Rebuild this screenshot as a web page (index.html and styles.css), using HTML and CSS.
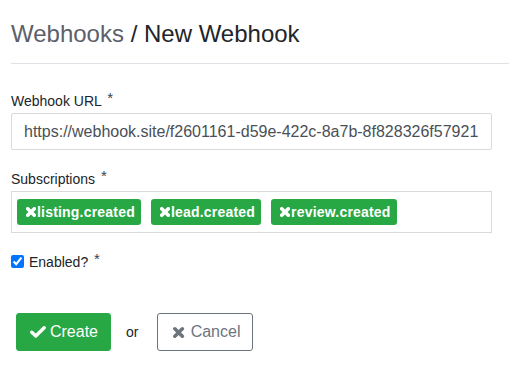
FILE: index.html
```html
<!DOCTYPE html>
<html lang="en">
<head>
<meta charset="utf-8">
<title>New Webhook</title>
<link rel="stylesheet" href="styles.css">
</head>
<body>
<div class="page">
  <h1 class="title"><span class="crumb">Webhooks</span> / New Webhook</h1>
  <hr class="rule">
  <form class="form">
    <div class="group">
      <label class="label" for="url">Webhook URL <sup class="req">*</sup></label>
      <input id="url" class="input" type="text" value="https://webhook.site/f2601161-d59e-422c-8a7b-8f828326f57921">
    </div>
    <div class="group">
      <label class="label">Subscriptions <sup class="req">*</sup></label>
      <div class="tags">
        <span class="tag"><svg class="tag-x" viewBox="0 0 10 10"><path d="M1.7 1.7 L8.3 8.3 M8.3 1.7 L1.7 8.3"/></svg>listing.created</span>
        <span class="tag"><svg class="tag-x" viewBox="0 0 10 10"><path d="M1.7 1.7 L8.3 8.3 M8.3 1.7 L1.7 8.3"/></svg>lead.created</span>
        <span class="tag"><svg class="tag-x" viewBox="0 0 10 10"><path d="M1.7 1.7 L8.3 8.3 M8.3 1.7 L1.7 8.3"/></svg>review.created</span>
      </div>
    </div>
    <div class="group check-group">
      <input id="enabled" class="check" type="checkbox" checked>
      <label class="check-label" for="enabled">Enabled? <sup class="req">*</sup></label>
    </div>
    <div class="actions">
      <button type="button" class="btn btn-create"><svg class="ico-check" viewBox="0 0 16 12"><path d="M1.8 6.2 L5.8 10 L14.2 1.8"/></svg>Create</button>
      <span class="or">or</span>
      <button type="button" class="btn btn-cancel"><svg class="ico-x" viewBox="0 0 12 12"><path d="M2 2 L10 10 M10 2 L2 10"/></svg>Cancel</button>
    </div>
  </form>
</div>
</body>
</html>
```

FILE: styles.css
```css
* { box-sizing: border-box; }

html, body {
  margin: 0;
  padding: 0;
  background: #ffffff;
  font-family: "Liberation Sans", Arial, sans-serif;
  color: #212529;
}

.page {
  padding: 19px 0 0 11px;
}

.title {
  margin: 0;
  font-size: 24px;
  line-height: 29px;
  font-weight: normal;
  color: #212529;
}

.crumb {
  color: #5c6069;
}

.rule {
  margin: 15px 0 0 0;
  border: 0;
  border-top: 1px solid #dee2e6;
  height: 0;
}

.form {
  width: 481px;
  margin-top: 27px;
}

.group {
  margin-bottom: 19px;
}

.label {
  display: block;
  font-size: 14px;
  line-height: 21px;
  margin-bottom: 1px;
  color: #212529;
}

.req {
  font-size: 15px;
  line-height: 0;
  vertical-align: 3px;
  margin-left: 2px;
  color: #3a3f4a;
}

.input {
  display: block;
  width: 100%;
  height: 37px;
  margin: 0;
  padding: 0 12px;
  border: 1px solid #dadada;
  border-radius: 2px;
  font-family: "Liberation Sans", Arial, sans-serif;
  font-size: 16px;
  color: #495057;
  background: #fff;
  outline: none;
}

.tags {
  display: flex;
  gap: 10px;
  height: 42px;
  padding: 7px 5px;
  border: 1px solid #dadada;
}

.tag {
  display: flex;
  align-items: center;
  height: 26px;
  padding: 0 6px 0 9px;
  background: #28a745;
  border-radius: 3px;
  color: #ffffff;
  font-size: 14px;
  font-weight: bold;
  letter-spacing: 0.2px;
}

.tag-x {
  width: 10px;
  height: 10px;
  margin-right: 1px;
  fill: none;
  stroke: #ffffff;
  stroke-width: 3.6;
  stroke-linecap: round;
}

.check-group {
  display: flex;
  align-items: flex-start;
  margin-bottom: 40px;
}

.check {
  width: 13px;
  height: 13px;
  margin: 3px 5px 0 0;
  accent-color: #0075ff;
}

.check-label {
  font-size: 14px;
  line-height: 21px;
  color: #212529;
}

.actions {
  display: flex;
  align-items: center;
  padding-left: 5px;
}

.btn {
  display: flex;
  align-items: center;
  height: 38px;
  padding: 0 12px;
  border-radius: 3px;
  font-family: "Liberation Sans", Arial, sans-serif;
  font-size: 16px;
  cursor: pointer;
}

.btn-create {
  width: 95px;
  background: #28a745;
  border: 1px solid #28a745;
  color: #ffffff;
  padding-left: 13px;
}

.ico-check {
  width: 16px;
  height: 12px;
  margin-right: 4px;
  fill: none;
  stroke: #ffffff;
  stroke-width: 3.4;
  stroke-linecap: round;
  stroke-linejoin: round;
}

.or {
  margin: 0 19px 0 15px;
  font-size: 14px;
  color: #212529;
}

.btn-cancel {
  width: 96px;
  background: #ffffff;
  border: 1px solid #6c757d;
  color: #6c757d;
  padding-left: 15px;
}

.ico-x {
  width: 13px;
  height: 13px;
  margin-right: 6px;
  fill: none;
  stroke: #6c757d;
  stroke-width: 3.8;
  stroke-linecap: round;
}
```
